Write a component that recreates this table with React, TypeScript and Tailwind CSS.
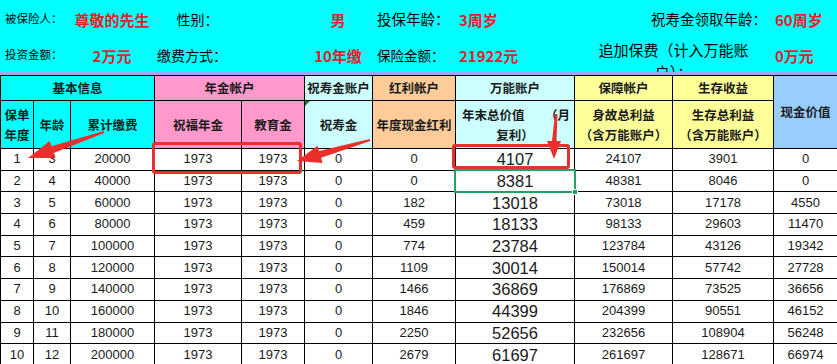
import React from "react";

const cjk = "font-['Noto_Sans_CJK_SC',sans-serif]";
const num = "font-['Liberation_Sans','Noto_Sans_CJK_SC',sans-serif]";

const colWidths = [33, 37, 84, 87, 63, 68, 83, 119, 98, 101, 64];

const rows: number[][] = [
  [1, 3, 20000, 1973, 1973, 0, 0, 4107, 24107, 3901, 0],
  [2, 4, 40000, 1973, 1973, 0, 0, 8381, 48381, 8046, 0],
  [3, 5, 60000, 1973, 1973, 0, 182, 13018, 73018, 17178, 4550],
  [4, 6, 80000, 1973, 1973, 0, 459, 18133, 98133, 29603, 11470],
  [5, 7, 100000, 1973, 1973, 0, 774, 23784, 123784, 43126, 19342],
  [6, 8, 120000, 1973, 1973, 0, 1109, 30014, 150014, 57742, 27728],
  [7, 9, 140000, 1973, 1973, 0, 1466, 36869, 176869, 73525, 36656],
  [8, 10, 160000, 1973, 1973, 0, 1846, 44399, 204399, 90551, 46152],
  [9, 11, 180000, 1973, 1973, 0, 2250, 52656, 232656, 108904, 56248],
  [10, 12, 200000, 1973, 1973, 0, 2679, 61697, 261697, 128671, 66974],
];

const Red = ({ children }: { children: React.ReactNode }) => (
  <span className="text-[15px] font-bold text-[#e0222a]">{children}</span>
);

const InfoPanel = () => (
  <div className={`h-[72px] bg-[#00ffff] text-black ${cjk}`}>
    {/* row 1 */}
    <div className="flex h-[38px] items-center">
      <div className="w-[70px] pl-[5px] text-[11.5px]">被保险人：</div>
      <div className="w-[84px] text-center"><Red>尊敬的先生</Red></div>
      <div className="w-[87px] text-center text-[14px]">性别：</div>
      <div className="w-[63px]" />
      <div className="w-[68px] text-center"><Red>男</Red></div>
      <div className="w-[83px] pl-[5px] text-[14.5px]">投保年龄：</div>
      <div className="w-[119px] pl-[4px]"><Red>3周岁</Red></div>
      <div className="w-[199px] pr-[6px] text-right text-[14.5px]">祝寿金领取年龄：</div>
      <div className="w-[64px] pl-[2px]"><Red>60周岁</Red></div>
    </div>
    {/* row 2 */}
    <div className="flex h-[34px] items-center overflow-hidden">
      <div className="w-[70px] pl-[5px] text-[11.5px]">投资金额：</div>
      <div className="w-[84px] text-center"><Red>2万元</Red></div>
      <div className="w-[87px] pl-[3px] text-[14px]">缴费方式：</div>
      <div className="w-[63px]" />
      <div className="w-[68px] text-center"><Red>10年缴</Red></div>
      <div className="w-[83px] pl-[5px] text-[13.5px]">保险金额：</div>
      <div className="w-[119px] pl-[4px]"><Red>21922元</Red></div>
      <div className="flex h-[34px] w-[199px] justify-center self-start pt-[1px]">
        <div className="w-[154px] text-center text-[15px] leading-[22px]">追加保费（计入万能账户）：</div>
      </div>
      <div className="w-[64px] pl-[2px]"><Red>0万元</Red></div>
    </div>
  </div>
);

const th = "border border-black font-bold text-[12.5px] text-[#1a1a1a] text-center align-middle p-0";

const Arrows = () => (
  <svg className="pointer-events-none absolute left-0 top-0" width="837" height="364">
    <polygon
      fill="#ec2f2b"
      points="103.7,131 51.5,146.3 49.7,141.1 28,158 55.5,158.1 53.7,152.9 104.3,133"
    />
    <polygon
      fill="#ec2f2b"
      points="369.7,139 319.1,151 317.6,145.8 297,161 322.6,163 321.1,157.8 370.3,141"
    />
    <polygon
      fill="#ec2f2b"
      points="555,114 552,141 547,141 554,159 561,141 556.5,141 557.5,114"
    />
  </svg>
);

export default function App() {
  return (
    <div className="relative h-[364px] w-[837px] overflow-hidden bg-white">
      <InfoPanel />
      <div className="h-[3px] bg-[#9fa8f6]" />
      <table className={`table-fixed border-collapse ${cjk}`} style={{ width: 837 }}>
        <colgroup>
          {colWidths.map((w, i) => (
            <col key={i} style={{ width: w }} />
          ))}
        </colgroup>
        <thead>
          <tr className="h-[25px]">
            <th colSpan={3} className={`${th} bg-[#00ffff]`}>基本信息</th>
            <th colSpan={2} className={`${th} bg-[#ff99cc]`}>年金帐户</th>
            <th className={`${th} bg-[#ccffff]`}>祝寿金账户</th>
            <th className={`${th} bg-[#ffcc99]`}>红利帐户</th>
            <th className={`${th} bg-[#ccffff]`}>万能账户</th>
            <th className={`${th} bg-[#ffff99]`}>保障帐户</th>
            <th className={`${th} bg-[#ffff99]`}>生存收益</th>
            <th rowSpan={2} className={`${th} bg-[#99ccff]`}>现金价值</th>
          </tr>
          <tr className="h-[48px] leading-[20px]">
            <th className={`${th} bg-[#00ffff]`}>保单<br />年度</th>
            <th className={`${th} bg-[#00ffff]`}>年龄</th>
            <th className={`${th} bg-[#00ffff]`}>累计缴费</th>
            <th className={`${th} bg-[#ff99cc]`}>祝福年金</th>
            <th className={`${th} bg-[#ff99cc]`}>教育金</th>
            <th className={`${th} relative bg-[#ccffff]`}>
              <span className="absolute left-0 top-0 h-0 w-0 border-r-[5px] border-t-[5px] border-r-transparent border-t-[#1f7a3a]" />
              祝寿金
            </th>
            <th className={`${th} bg-[#ffcc99]`}>年度现金红利</th>
            <th className={`${th} bg-[#ccffff]`}>
              <div className="flex justify-between pl-[6px] pr-[4px]">
                <span>年末总价值</span>
                <span>（月</span>
              </div>
              <div className="text-center">复利）</div>
            </th>
            <th className={`${th} bg-[#ffff99]`}>身故总利益<br />（含万能账户）</th>
            <th className={`${th} bg-[#ffff99]`}>生存总利益<br />（含万能账户）</th>
          </tr>
        </thead>
        <tbody className={`${num} text-[13px] text-[#1a1a1a]`}>
          {rows.map((r, ri) => (
            <tr key={ri} className="h-[21.7px]">
              {r.map((v, ci) => (
                <td
                  key={ci}
                  className={`border border-black p-0 text-center leading-[20px] ${ci === 7 ? "text-[16.5px]" : ""}`}
                >
                  {v}
                </td>
              ))}
            </tr>
          ))}
        </tbody>
      </table>

      {/* annotations drawn over the sheet */}
      <div className="absolute left-[152px] top-[142px] h-[32px] w-[150px] rounded-[3px] border-[3px] border-[#e8302c]" />
      <div className="absolute left-[452px] top-[144px] h-[25px] w-[118px] rounded-[3px] border-[3px] border-[#e8302c]" />
      <div className="absolute left-[454px] top-[169px] h-[24px] w-[122px] border-2 border-[#21a366]">
        <span className="absolute -bottom-[4px] -right-[4px] h-[6px] w-[6px] border border-white bg-[#21a366]" />
      </div>
      <Arrows />
    </div>
  );
}
